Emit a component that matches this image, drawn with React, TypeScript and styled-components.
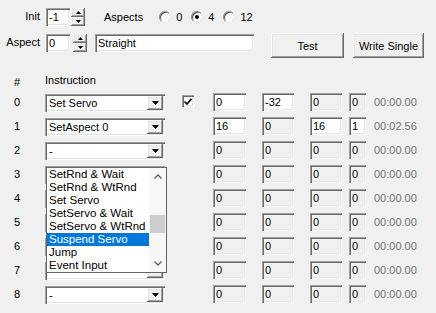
import React from 'react';
import styled, { createGlobalStyle } from 'styled-components';

const Global = createGlobalStyle`
  html, body { margin: 0; padding: 0; background: #f0f0f0; }
  body { font-family: "Liberation Sans", Arial, sans-serif; font-size: 11px; color: #000; }
`;

const sunken = `
  box-shadow: inset 1px 1px 0 #a0a0a0, inset 2px 2px 0 #696969, inset -1px -1px 0 #ffffff, inset -2px -2px 0 #e3e3e3;
`;
const raised = `
  box-shadow: inset -1px -1px 0 #696969, inset 1px 1px 0 #ffffff, inset -2px -2px 0 #a0a0a0, inset 2px 2px 0 #e3e3e3;
`;

const Page = styled.div`
  position: relative;
  width: 436px;
  height: 313px;
  overflow: hidden;
  background: #f0f0f0;
  padding-top: 8px;
  box-sizing: border-box;
`;

const Line = styled.div<{ $mt?: number }>`
  display: flex;
  align-items: flex-start;
  margin-top: ${p => p.$mt ?? 0}px;
  height: 18px;
`;

const Label = styled.div`
  width: 40px;
  margin-right: 6px;
  text-align: right;
  line-height: 16px;
`;

const TextBox = styled.div<{ $w: number; $ml?: number; $off?: boolean; $h?: number }>`
  width: ${p => p.$w}px;
  height: ${p => p.$h ?? 18}px;
  margin-left: ${p => p.$ml ?? 0}px;
  background: ${p => (p.$off ? '#f0f0f0' : '#ffffff')};
  ${sunken}
  box-sizing: border-box;
  padding: 3px 0 0 3px;
  line-height: 13px;
  white-space: nowrap;
  overflow: hidden;
  flex: none;
`;

const Spin = styled.div<{ $ml: number }>`
  display: flex;
  flex-direction: column;
  width: 14px;
  height: 18px;
  margin-left: ${p => p.$ml}px;
  flex: none;
`;

const SpinHalf = styled.div`
  flex: 1;
  background: #f0f0f0;
  ${raised}
  display: flex;
  align-items: center;
  justify-content: center;
`;

const Tri = ({ up }: { up?: boolean }) => (
  <svg width="5" height="3" viewBox="0 0 5 3">
    <polygon points={up ? '0,3 5,3 2.5,0' : '0,0 5,0 2.5,3'} fill="#000" />
  </svg>
);

const Aspects = styled.div`
  margin-left: 19px;
  line-height: 18px;
`;

const RadioGroup = styled.div`
  display: flex;
  align-items: center;
  gap: 9px;
  margin-left: 16px;
  height: 18px;
`;

const RadioItem = styled.label`
  display: flex;
  align-items: center;
  gap: 5px;
`;

const RadioCircle = styled.span<{ $on?: boolean }>`
  width: 12px;
  height: 12px;
  border-radius: 50%;
  background: #fff;
  box-sizing: border-box;
  border: 1px solid;
  border-color: #8a8a8a #e6e6e6 #e6e6e6 #8a8a8a;
  box-shadow: inset 1px 1px 0 #505050;
  display: flex;
  align-items: center;
  justify-content: center;
  &::after {
    content: '';
    display: ${p => (p.$on ? 'block' : 'none')};
    width: 4px;
    height: 4px;
    border-radius: 50%;
    background: #000;
  }
`;

const Button = styled.div<{ $w: number; $ml: number }>`
  width: ${p => p.$w}px;
  height: 25px;
  margin-left: ${p => p.$ml}px;
  margin-top: -1px;
  background: #f0f0f0;
  ${raised}
  display: flex;
  align-items: center;
  justify-content: center;
  flex: none;
`;

const Header = styled.div`
  display: flex;
  margin-top: 21px;
  height: 14px;
  line-height: 14px;
`;

const Num = styled.div`
  width: 45px;
  padding-left: 14px;
  box-sizing: border-box;
  line-height: 18px;
  flex: none;
`;

const Rows = styled.div`
  margin-top: 6px;
  display: flex;
  flex-direction: column;
`;

const Row = styled.div`
  display: flex;
  align-items: flex-start;
  height: 24px;
`;

const Combo = styled.div`
  position: relative;
  width: 120px;
  height: 18px;
  margin-top: 1px;
  background: #fff;
  ${sunken}
  box-sizing: border-box;
  display: flex;
  flex: none;
`;

const ComboText = styled.div`
  flex: 1;
  padding: 3px 0 0 4px;
  line-height: 13px;
`;

const DropBtn = styled.div`
  width: 16px;
  height: 14px;
  margin: 2px 2px 0 0;
  background: #f0f0f0;
  ${raised}
  display: flex;
  align-items: center;
  justify-content: center;
`;

const CheckCell = styled.div`
  width: 48px;
  flex: none;
  padding: 2px 0 0 17px;
  box-sizing: border-box;
`;

const Check = styled.div`
  width: 12px;
  height: 12px;
  background: #fff;
  ${sunken}
  display: flex;
  align-items: center;
  justify-content: center;
`;

const Time = styled.div`
  margin-left: 8px;
  color: #707070;
  line-height: 18px;
  white-space: nowrap;
`;

const Popup = styled.div`
  position: absolute;
  left: 46px;
  top: 167px;
  width: 121px;
  height: 106px;
  background: #fff;
  border: 1px solid #646464;
  box-sizing: border-box;
  display: flex;
  z-index: 5;
`;

const List = styled.div`
  flex: 1;
  display: flex;
  flex-direction: column;
`;

const Item = styled.div<{ $sel?: boolean }>`
  height: 13px;
  line-height: 13px;
  padding-left: 2px;
  font-size: 11.5px;
  white-space: nowrap;
  background: ${p => (p.$sel ? '#0078d7' : 'transparent')};
  color: ${p => (p.$sel ? '#fff' : '#000')};
`;

const Scroll = styled.div`
  width: 17px;
  display: flex;
  flex-direction: column;
  background: #f7f7f7;
`;

const ScrollArrow = styled.div`
  height: 17px;
  display: flex;
  align-items: center;
  justify-content: center;
  flex: none;
`;

const Track = styled.div`
  flex: 1;
`;

const Thumb = styled.div`
  margin: 30px 1px 0 1px;
  height: 18px;
  background: #cdcdcd;
`;

const Chevron = ({ up }: { up?: boolean }) => (
  <svg width="8" height="5" viewBox="0 0 8 5">
    <polyline
      points={up ? '0.5,4.5 4,1 7.5,4.5' : '0.5,0.5 4,4 7.5,0.5'}
      fill="none"
      stroke="#606060"
      strokeWidth="1.3"
    />
  </svg>
);

type RowData = {
  instr: string;
  check?: boolean;
  f: [string, boolean][];
  time: string;
};

const off = (v: string): [string, boolean] => [v, true];
const on = (v: string): [string, boolean] => [v, false];

const rows: RowData[] = [
  { instr: 'Set Servo', check: true, f: [on('0'), on('-32'), off('0'), off('0')], time: '00:00.00' },
  { instr: 'SetAspect 0', f: [on('16'), off('0'), on('16'), on('1')], time: '00:02.56' },
  ...Array.from({ length: 7 }, () => ({ instr: '-', f: [off('0'), off('0'), off('0'), off('0')], time: '00:00.00' })),
];

const widths = [33, 32, 32, 17];
const gaps = [0, 16, 16, 7];

const items = [
  'SetRnd & Wait',
  'SetRnd & WtRnd',
  'Set Servo',
  'SetServo & Wait',
  'SetServo & WtRnd',
  'Suspend Servo',
  'Jump',
  'Event Input',
];

export default function App() {
  return (
    <Page>
      <Global />
      <Line>
        <Label>Init</Label>
        <TextBox $w={24}>-1</TextBox>
        <Spin $ml={1}>
          <SpinHalf><Tri up /></SpinHalf>
          <SpinHalf><Tri /></SpinHalf>
        </Spin>
        <Aspects>Aspects</Aspects>
        <RadioGroup>
          <RadioItem><RadioCircle />0</RadioItem>
          <RadioItem><RadioCircle $on />4</RadioItem>
          <RadioItem><RadioCircle />12</RadioItem>
        </RadioGroup>
      </Line>
      <Line $mt={8}>
        <Label>Aspect</Label>
        <TextBox $w={24}>0</TextBox>
        <Spin $ml={3}>
          <SpinHalf><Tri up /></SpinHalf>
          <SpinHalf><Tri /></SpinHalf>
        </Spin>
        <TextBox $w={159} $ml={8}>Straight</TextBox>
        <Button $w={73} $ml={17}>Test</Button>
        <Button $w={71} $ml={9}>Write Single</Button>
      </Line>
      <Header>
        <Num>#</Num>
        <div>Instruction</div>
      </Header>
      <Rows>
        {rows.map((r, i) => (
          <Row key={i}>
            <Num>{i}</Num>
            <Combo>
              <ComboText>{r.instr}</ComboText>
              <DropBtn>
                <svg width="7" height="4" viewBox="0 0 7 4">
                  <polygon points="0,0 7,0 3.5,4" fill="#000" />
                </svg>
              </DropBtn>
            </Combo>
            <CheckCell>
              {r.check && (
                <Check>
                  <svg width="8" height="7" viewBox="0 0 8 7">
                    <polyline points="0.5,3.5 3,6 7.5,0.8" fill="none" stroke="#000" strokeWidth="1.6" />
                  </svg>
                </Check>
              )}
            </CheckCell>
            {r.f.map(([v, d], j) => (
              <TextBox key={j} $w={widths[j]} $ml={gaps[j]} $off={d}>
                {v}
              </TextBox>
            ))}
            <Time>{r.time}</Time>
          </Row>
        ))}
      </Rows>
      <Popup>
        <List>
          {items.map(t => (
            <Item key={t} $sel={t === 'Suspend Servo'}>{t}</Item>
          ))}
        </List>
        <Scroll>
          <ScrollArrow><Chevron up /></ScrollArrow>
          <Track><Thumb /></Track>
          <ScrollArrow><Chevron /></ScrollArrow>
        </Scroll>
      </Popup>
    </Page>
  );
}
